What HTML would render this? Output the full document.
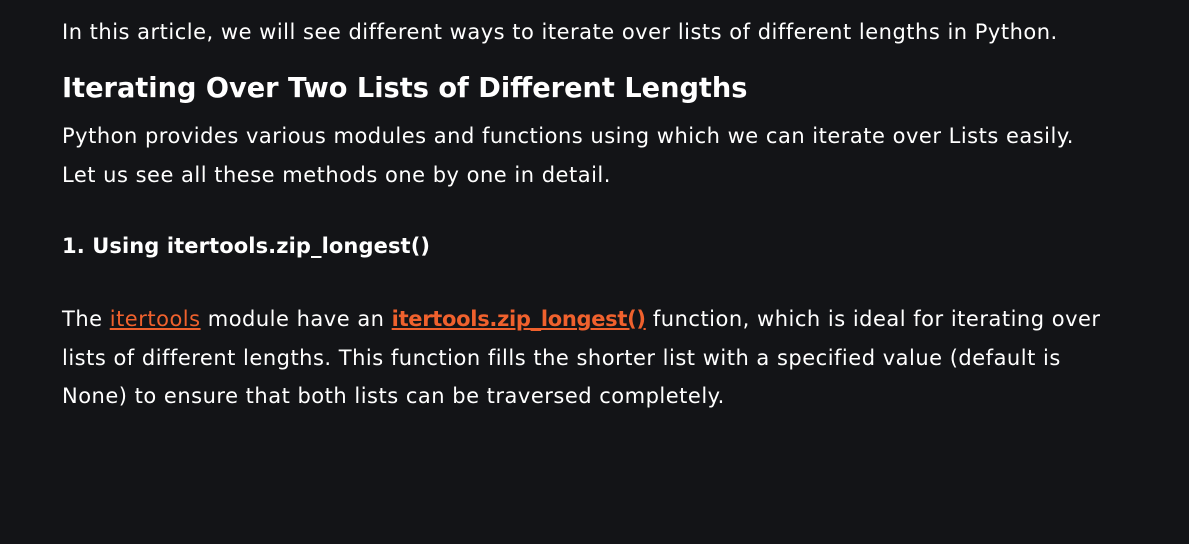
<!DOCTYPE html>
<html><head><meta charset="utf-8"><style>
html,body{margin:0;padding:0;background:#131417;width:1189px;height:544px;overflow:hidden}
body{font-family:"DejaVu Sans",sans-serif;color:#fff}
.c{position:absolute;left:62px;width:1120px;white-space:nowrap}
p{margin:0;font-size:21px;line-height:38.5px;letter-spacing:0.5px}
h2{margin:0;font-size:27.2px;font-weight:bold;letter-spacing:0px}
h3{margin:0;font-size:21px;font-weight:bold;letter-spacing:0.1px}
a{color:#f0612d;text-decoration:underline}
a b{letter-spacing:-0.3px}
</style></head><body>
<div class="c" style="top:13px"><p>In this article, we will see different ways to iterate over lists of different lengths in Python.</p></div>
<div class="c" style="top:73px"><h2>Iterating Over Two Lists of Different Lengths</h2></div>
<div class="c" style="top:117px"><p>Python provides various modules and functions using which we can iterate over Lists easily.<br>Let us see all these methods one by one in detail.</p></div>
<div class="c" style="top:234px"><h3>1. Using itertools.zip_longest()</h3></div>
<div class="c" style="top:300px"><p>The <a>itertools</a> module have an <a><b>itertools.zip_longest()</b></a> function, which is ideal for iterating over<br>lists of different lengths. This function fills the shorter list with a specified value (default is<br>None) to ensure that both lists can be traversed completely.</p></div>
</body></html>
